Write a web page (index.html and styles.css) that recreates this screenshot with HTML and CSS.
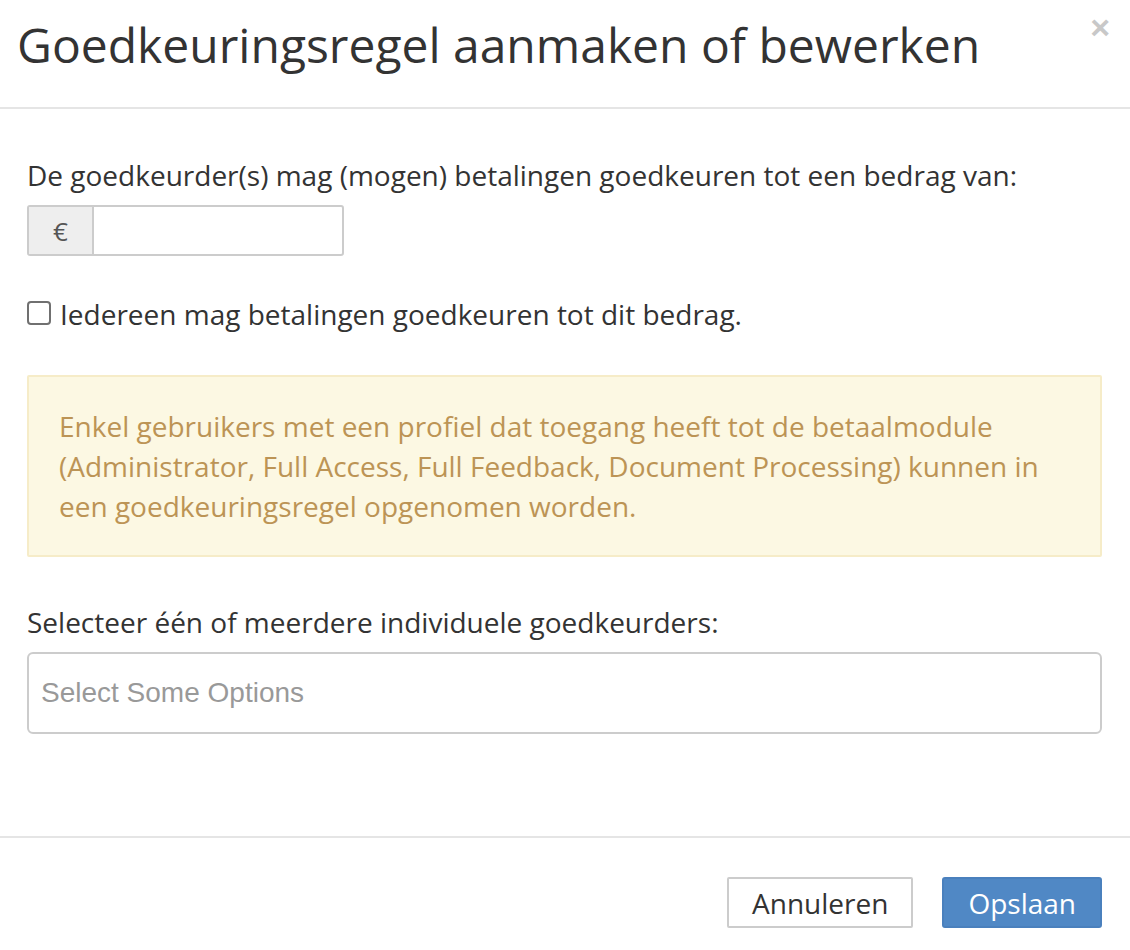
FILE: index.html
```html
<!DOCTYPE html>
<html lang="nl">
<head>
<meta charset="utf-8">
<title>Goedkeuringsregel</title>
<link rel="stylesheet" href="styles.css">
</head>
<body>
<div class="modal">
  <header class="modal-header">
    <h1 class="modal-title">Goedkeuringsregel aanmaken of bewerken</h1>
    <span class="close">&times;</span>
  </header>
  <main class="modal-body">
    <label class="field-label">De goedkeurder(s) mag (mogen) betalingen goedkeuren tot een bedrag van:</label>
    <div class="input-group">
      <span class="addon">€</span>
      <span class="amount"></span>
    </div>
    <label class="check-row">
      <span class="checkbox"></span>
      <span>Iedereen mag betalingen goedkeuren tot dit bedrag.</span>
    </label>
    <div class="alert">Enkel gebruikers met een profiel dat toegang heeft tot de betaalmodule (Administrator, Full Access, Full Feedback, Document Processing) kunnen in een goedkeuringsregel opgenomen worden.</div>
    <label class="field-label select-label">Selecteer één of meerdere individuele goedkeurders:</label>
    <div class="chosen">Select Some Options</div>
  </main>
  <footer class="modal-footer">
    <button class="btn">Annuleren</button>
    <button class="btn btn-primary">Opslaan</button>
  </footer>
</div>
</body>
</html>
```
FILE: styles.css
```css
* { box-sizing: border-box; }
html, body { margin: 0; padding: 0; background: #fff; }
body {
  font-family: "Open Sans", "DejaVu Sans", sans-serif;
  color: #333;
  font-size: 28px;
  width: 1130px;
  height: 950px;
  overflow: hidden;
}
.modal { display: flex; flex-direction: column; }
.modal-header {
  display: flex;
  justify-content: space-between;
  align-items: flex-start;
  height: 109px;
  padding: 0 18px 0 17px;
  border-bottom: 2px solid #e5e5e5;
}
.modal-title {
  margin: 13px 0 0;
  font-weight: 400;
  font-size: 48px;
  line-height: 64px;
  color: #333;
}
.close {
  font-family: "Liberation Sans", Arial, sans-serif;
  font-weight: 700;
  font-size: 34px;
  line-height: 34px;
  margin-top: 10px;
  margin-right: 2px;
  color: #c8c8c8;
}
.modal-body {
  padding: 0 28px 0 27px;
  height: 727px;
}
.field-label { display: block; margin-top: 49px; line-height: 34px; }
.input-group {
  display: flex;
  width: 317px;
  height: 51px;
  margin-top: 13px;
  border: 2px solid #ccc;
  border-radius: 3px;
}
.addon {
  width: 65px;
  background: #eee;
  border-right: 2px solid #ccc;
  display: flex;
  align-items: center;
  justify-content: center;
  color: #555;
  font-size: 26px;
}
.amount { flex: 1; }
.check-row {
  display: flex;
  align-items: center;
  gap: 9px;
  margin-top: 41px;
  line-height: 34px;
}
.checkbox {
  width: 24px;
  height: 24px;
  border: 2px solid #707070;
  border-radius: 4px;
  margin-top: -2px;
}
.alert {
  margin-top: 44px;
  background: #fcf8e3;
  border: 2px solid #f6ecc8;
  border-radius: 2px;
  color: #bc9455;
  padding: 29px 50px 29px 30px;
  line-height: 40px;
}
.select-label { margin-top: 48px; }
.chosen {
  margin-top: 13px;
  height: 82px;
  border: 2px solid #ccc;
  border-radius: 6px;
  display: flex;
  align-items: center;
  padding-left: 12px;
  font-family: "Liberation Sans", Arial, sans-serif;
  font-size: 28px;
  color: #999;
}
.modal-footer {
  border-top: 2px solid #e5e5e5;
  display: flex;
  justify-content: flex-end;
  gap: 29px;
  padding: 39px 28px 0 0;
}
.btn {
  font-family: "Open Sans", "DejaVu Sans", sans-serif;
  font-size: 28px;
  height: 51px;
  padding: 0 23px;
  background: #fff;
  color: #333;
  border: 2px solid #ccc;
  border-radius: 2px;
}
.btn-primary {
  background: #5088c5;
  border-color: #4a80bd;
  color: #fff;
  padding: 0 24px;
  border-radius: 3px;
}
```
